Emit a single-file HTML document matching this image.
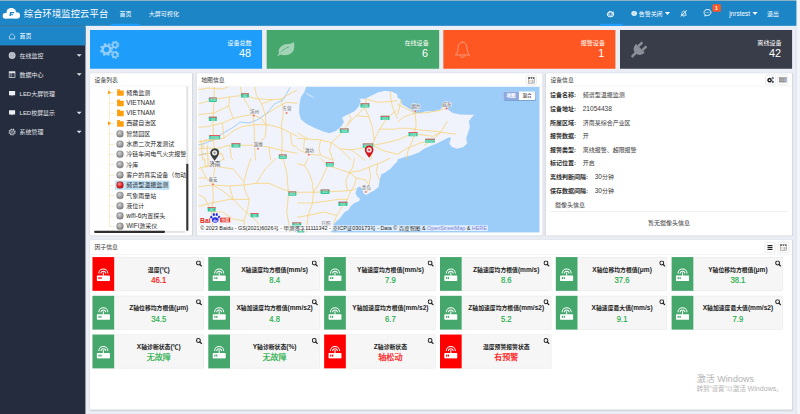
<!DOCTYPE html>
<html lang="zh-CN">
<head>
<meta charset="utf-8">
<title>综合环境监控云平台</title>
<style>
*{box-sizing:border-box;margin:0;padding:0}
html,body{width:800px;height:414px;overflow:hidden;background:#eceef5}
body{font-family:"Liberation Sans","Noto Sans CJK SC",sans-serif;font-size:14px;color:#333}
#app{position:absolute;left:0;top:0;width:1920px;height:994px;transform:scale(.4166667);transform-origin:0 0;background:#eceef5;overflow:hidden}
.abs{position:absolute}
/* header */
#topstrip{left:0;top:0;width:1912px;height:2px;background:#7fa9c0}
#hdr{left:0;top:2px;width:1912px;height:60px;background:#1b85c6;color:#fff}
#hdrline{left:0;top:61px;width:205px;height:3px;background:#15669a}
#rstrip{left:1912px;top:0;width:8px;height:994px;background:#f3f5fa}
#rline{left:1909px;top:62px;width:3px;height:932px;background:#dfe3ee}
#title{left:57px;top:16.500px;font-size:22.3px;letter-spacing:.25px;line-height:32px;white-space:nowrap;color:#fff}
.nav{top:3px;height:60px;line-height:60px;font-size:14.5px;color:#fff;white-space:nowrap}
#navbar{left:267px;top:57px;width:68px;height:5px;background:#1e9fff}
/* side */
#side{left:0;top:64px;width:205px;height:930px;background:#252c3e}
.mi{left:0;width:205px;height:45px;line-height:47px;color:#e4e6ea;font-size:14.3px;padding-left:47px;white-space:nowrap}
.mi.on{background:#1c86c8;color:#fff}
.mi svg{position:absolute;left:20px;top:13.500px;width:18px;height:18px}
.mi i{position:absolute;left:184px;top:20px;border:6px solid transparent;border-top-color:#dfe2e8;border-bottom-width:0}
/* stat cards */
.sc{top:72px;width:413px;height:93px;color:#fff}
.sc .l{position:absolute;right:25px;top:21px;font-size:14.6px;line-height:20px;white-space:nowrap}
.sc .n{position:absolute;right:26.500px;top:41px;font-size:26px;line-height:30px;white-space:nowrap}
.sc svg{position:absolute;left:24px;top:26px;width:48px;height:42px}
/* panels */
.pn{background:#fff;border-radius:2px;box-shadow:0 1px 4px rgba(0,0,20,.13)}
.ph{position:absolute;left:0;top:0;right:0;height:31px;border-bottom:1px solid #e6e8ee;line-height:31px;padding-left:11px;font-size:14px;color:#333;white-space:nowrap}
.hb{position:absolute;height:21px;border:1px solid #d9d9d9;background:#fcfcfc;border-radius:4px}
/* tree */
.tr{position:absolute;left:87px;height:24.7px;line-height:24.7px;font-size:14.400px;color:#2a2a2a;white-space:nowrap}
.ball{position:absolute;left:63px;width:18px;height:18px;margin-top:-1px;border-radius:50%;border:1px solid #666;background:radial-gradient(circle at 42% 35%,#d4d4d4 0,#a0a0a0 45%,#6a6a6a 100%)}
.ball.red{border-color:#8a1010;background:radial-gradient(circle at 42% 35%,#ff9a9a 0,#e52222 45%,#9a0d0d 100%)}
.fold{position:absolute;left:65px;width:16px;height:13px;background:#ff9f10;border-radius:1px}
.fold:before{content:"";position:absolute;left:0;top:-3px;width:7px;height:4px;background:#ff9f10;border-radius:1px 1px 0 0}
.stub{position:absolute;left:46px;width:13px;height:1px;background:#f7cf8e}
.arr{position:absolute;left:43px;border:5px solid transparent;border-left:8px solid #ff9f10;border-right-width:0}
/* info */
.ir{position:absolute;left:10px;height:20px;line-height:20px;font-size:14.400px;white-space:nowrap;color:#3a3a3a}
.ir .e{font-size:15.800px}
.ir b{font-weight:700;color:#303030;margin-right:16px;font-size:14.400px}
/* factor cards */
.fc{width:267px;height:81px;background:#f6f6f6;border:1px solid #e4e4e4}
.fc .ib{position:absolute;left:-1px;top:-1px;width:52px;height:81px;background:#45a76c}
.fc.r .ib{background:#ff0000}
.fc .ib svg{position:absolute;left:10px;top:24px;width:32px;height:34px}
.fc .t{position:absolute;left:51px;right:0;top:19px;text-align:center;font-size:14px;font-weight:700;line-height:20px;color:#222;white-space:nowrap}
.fc .v{position:absolute;left:51px;right:0;top:41px;text-align:center;font-size:21.500px;transform:scaleX(.86);line-height:26px;color:#1fae48;-webkit-text-stroke:.45px currentColor;white-space:nowrap}
.fc.r .v{color:#ff0a0a}
.fc .v.c{font-size:19.400px;transform:none}
.fc .t .e{font-size:15.800px}
.fc .s{position:absolute;left:247px;top:6.500px;width:15px;height:15px}
</style>
</head>
<body>
<div id="app">
<!--HEADER-->
<div id="hdr" class="abs"></div>
<div id="topstrip" class="abs"></div>
<div id="rstrip" class="abs"></div>
<div id="rline" class="abs"></div>
<svg class="abs" style="left:6px;top:19px;width:42px;height:26px" viewBox="0 0 42 26"><circle cx="7" cy="19" r="7" fill="#fff"/><circle cx="21" cy="11.500" r="11.500" fill="#fff"/><circle cx="34.200" cy="18.200" r="7.800" fill="#fff"/><rect x="7" y="14" width="27" height="12" fill="#fff"/><path d="M16.500 19.500 18.200 10h10.300l-.7 3h-6.500l-.4 2h5l-.5 2.500h-5l-.4 2z" fill="#1b85c6"/></svg>
<div id="title" class="abs">综合环境监控云平台</div>
<div class="abs nav" style="left:287px">首页</div>
<div class="abs nav" style="left:357px">大屏可视化</div>
<div id="navbar" class="abs"></div>
<div class="abs" style="left:1440px;top:57px;width:55px;height:5px;background:#1e9fff"></div>
<!--HEADER-RIGHT-->
<svg class="abs" style="left:1455px;top:23.500px;width:22px;height:18px" viewBox="0 0 22 18"><path d="M17.600 12.500A7.800 6.600 0 1 0 16 14.800" fill="#7db9e0" stroke="#fff" stroke-width="2.300" stroke-linecap="round"/><path d="M9.500 11 17.500 5" stroke="#fff" stroke-width="2.300" stroke-linecap="round"/><path d="M8 8h5.500l-3.800 4.200z" fill="#15609a"/><path d="M4.800 9a5 4.500 0 0 1 3.200-4" fill="none" stroke="#fff" stroke-width="1.500"/></svg>
<svg class="abs" style="left:1513.500px;top:25.500px;width:16px;height:13px" viewBox="0 0 16 14"><ellipse cx="8" cy="7" rx="7.300" ry="6.300" fill="#e3eff8"/><ellipse cx="8" cy="7" rx="3.500" ry="3" fill="#b4d5ec"/></svg>
<div class="abs nav" style="left:1533px;font-size:14.300px">告警关闭</div>
<i class="abs" style="left:1595.500px;top:29px;border:6.300px solid transparent;border-top:7px solid #fff;border-bottom-width:0"></i>
<svg class="abs" style="left:1630px;top:22px;width:22px;height:20px" viewBox="0 0 22 20"><path d="M5 14.500c1.600-1.500 1.500-3.500 1.800-5.500.4-2.600 2-4.300 4.200-4.300s3.800 1.700 4.200 4.300c.3 2 .2 4 1.800 5.500z" fill="none" stroke="#fff" stroke-width="1.800" stroke-linejoin="round"/><path d="M9.500 16.500a1.600 1.600 0 0 0 3 0" fill="none" stroke="#fff" stroke-width="1.600"/><path d="M4 17.500 18.500 2.500" stroke="#fff" stroke-width="2.100"/></svg>
<svg class="abs" style="left:1687px;top:19.500px;width:22px;height:22px" viewBox="0 0 20 20"><path d="M10 2.500c4.300 0 7.500 2.900 7.500 6.500s-3.200 6.500-7.500 6.500c-.8 0-1.600-.1-2.300-.3L4.200 17l.7-3C3.400 12.800 2.500 11 2.500 9c0-3.600 3.200-6.500 7.500-6.500z" fill="none" stroke="#fff" stroke-width="2.100" stroke-linejoin="round"/><circle cx="6.800" cy="9" r="1" fill="#fff"/><circle cx="10" cy="9" r="1" fill="#fff"/><circle cx="13.200" cy="9" r="1" fill="#fff"/></svg>
<div class="abs" style="left:1710px;top:10px;width:19.500px;height:17.500px;background:#ff5722;border-radius:2px;color:#fff;font-size:12.500px;font-weight:700;line-height:20px;text-align:center">1</div>
<div class="abs nav" style="left:1750px;font-size:15.600px">jnrstest</div>
<i class="abs" style="left:1805.500px;top:29px;border:6.300px solid transparent;border-top:7px solid #fff;border-bottom-width:0"></i>
<div class="abs nav" style="left:1841px;font-size:14px">退出</div>

<!--SIDE-->
<div id="side" class="abs"></div>
<div id="hdrline" class="abs"></div>
<!--MENU-->
<div class="abs mi on" style="top:64px"><svg viewBox="0 0 17 17"><path d="M2.5 8.2 8.5 2.2l6 6v6.3h-12z" fill="none" stroke="#fff" stroke-width="1.4" stroke-linejoin="round"/></svg>首页</div>
<div class="abs mi" style="top:110px"><svg viewBox="0 0 17 17"><circle cx="8.500" cy="8.500" r="7.300" fill="#c9cdd6"/><ellipse cx="8.500" cy="8.500" rx="3.300" ry="7.300" fill="none" stroke="#8e95a6" stroke-width="1"/><path d="M1.200 8.500h14.600M2.500 4.800h12M2.500 12.200h12" stroke="#8e95a6" stroke-width=".9"/><circle cx="8.500" cy="8.500" r="7.300" fill="none" stroke="#e3e6eb" stroke-width="1.200"/></svg>在线监控<i></i></div>
<div class="abs mi" style="top:156px"><svg viewBox="0 0 17 17"><rect x="1.800" y="2" width="13.400" height="13" fill="none" stroke="#e0e3e8" stroke-width="1.700"/><rect x="1.800" y="2" width="13.400" height="3.600" fill="#e0e3e8"/><path d="M6.500 5v10" stroke="#e0e3e8" stroke-width="1.300"/><path d="M2 10h13" stroke="#e0e3e8" stroke-width=".9" stroke-opacity=".6"/></svg>数据中心<i></i></div>
<div class="abs mi" style="top:202px"><svg viewBox="0 0 17 17"><path d="M1.500 2.500h14v9.500H10l-2.500 3v-3H1.500z" fill="#eceef2"/></svg>LED大屏管理</div>
<div class="abs mi" style="top:248px"><svg viewBox="0 0 17 17"><path d="M1.500 2.500h14v9.500H10l-2.500 3v-3H1.500z" fill="#eceef2"/></svg>LED校屏显示<i></i></div>
<div class="abs mi" style="top:294px"><svg viewBox="0 0 17 17"><g transform="rotate(10 8.500 8.500)"><circle cx="8.500" cy="8.500" r="6.89" fill="none" stroke="#d5d8de" stroke-width="2.62" stroke-dasharray="2.705 2.705"/></g><circle cx="8.500" cy="8.500" r="5.300" fill="none" stroke="#d5d8de" stroke-width="1.700"/><circle cx="8.500" cy="8.500" r="2.200" fill="none" stroke="#d5d8de" stroke-width="1.300"/></svg>系统管理<i></i></div>

<!--STATS-->
<div class="abs sc" style="left:216px;background:#1e9dfa"><svg viewBox="0 0 90 93" style="position:absolute;left:0;top:0;width:90px;height:93px"><g transform="rotate(11 39.6 47.0)"><circle cx="39.6" cy="47.0" r="9.30" fill="none" stroke="#90cdfb" stroke-width="6.20"/><circle cx="39.6" cy="47.0" r="13.33" fill="none" stroke="#90cdfb" stroke-width="4.65" stroke-dasharray="5.235 5.235"/></g><g transform="rotate(11 60.3 35.6)"><circle cx="60.3" cy="35.6" r="5.88" fill="none" stroke="#90cdfb" stroke-width="3.92"/><circle cx="60.3" cy="35.6" r="8.43" fill="none" stroke="#90cdfb" stroke-width="2.94" stroke-dasharray="3.782 3.782"/></g><g transform="rotate(11 60.3 59.4)"><circle cx="60.3" cy="59.4" r="5.88" fill="none" stroke="#90cdfb" stroke-width="3.92"/><circle cx="60.3" cy="59.4" r="8.43" fill="none" stroke="#90cdfb" stroke-width="2.94" stroke-dasharray="3.782 3.782"/></g></svg><div class="l">设备总数</div><div class="n">48</div></div>
<div class="abs sc" style="left:640px;width:414px;background:#45a76c"><svg viewBox="0 0 42 33" style="position:absolute;left:25px;top:29px;width:42px;height:33px"><path d="M0 32.500 5 27.500C1.500 21 5 12 14 7.500 22 3.500 33 6.500 39.500 0c3.500 6 3.500 17-3 24.500-7 8-20 8.500-28.500 5L2.500 33.800z" fill="#a3d3b6"/><path d="M10 23.500c4-5 9.500-9 17.500-11.500" fill="none" stroke="#45a76c" stroke-width="1.700" stroke-linecap="round"/></svg><div class="l">在线设备</div><div class="n">6</div></div>
<div class="abs sc" style="left:1064px;background:#ff5722"><svg viewBox="0 0 38 42" style="position:absolute;left:26.500px;top:26px;width:38px;height:42px"><path d="M19 0v4M1.500 34c4.500-3.500 6-8 6.500-14 .5-7 1-9.500 3-12.500C13 5 16 4 19 4s6 1 8 3.500c2 3 2.500 5.500 3 12.500.5 6 2 10.500 6.500 14z" fill="none" stroke="#ffab91" stroke-width="1.900" stroke-linejoin="round"/><path d="M14.500 35.500a4.500 4.500 0 0 0 9 0" fill="none" stroke="#ffab91" stroke-width="1.900"/></svg><div class="l">报警设备</div><div class="n">1</div></div>
<div class="abs sc" style="left:1488px;background:#393d49"><svg viewBox="0 0 46 46" style="position:absolute;left:23px;top:24px;width:46px;height:46px"><g transform="translate(26.200 19.600) rotate(45)" fill="#8b8e96"><path d="M-14.500 0h29v3a14.500 14.500 0 0 1-29 0z"/><rect x="-9.800" y="-13.500" width="6" height="14" rx="2"/><rect x="3.800" y="-13.500" width="6" height="14" rx="2"/><rect x="-3" y="14" width="6" height="16" rx="1.500"/></g></svg><div class="l">离线设备</div><div class="n">42</div></div>

<!--PANELS-->
<div class="abs pn" style="left:216px;top:176px;width:245px;height:389px"><div class="ph">设备列表</div>
<div class="abs" style="left:0;top:33px;width:231px;height:345px;overflow:hidden">
<div class="abs" style="left:46px;top:0;width:1px;height:334px;background:#f7cf8e"></div>
<div class="stub" style="top:13.0px"></div>
<i class="arr" style="top:8.0px"></i>
<div class="fold" style="top:8.0px"></div>
<div class="tr" style="top:0.7px">倾角监测</div>
<div class="stub" style="top:37.7px"></div>
<div class="fold" style="top:32.7px"></div>
<div class="tr" style="top:25.4px"><span style="font-size:15.500px">VIETNAM</span></div>
<div class="stub" style="top:62.4px"></div>
<div class="fold" style="top:57.4px"></div>
<div class="tr" style="top:50.0px"><span style="font-size:15.500px">VIETNAM</span></div>
<div class="stub" style="top:87.1px"></div>
<i class="arr" style="top:82.1px"></i>
<div class="fold" style="top:82.1px"></div>
<div class="tr" style="top:74.8px">西藏自治区</div>
<div class="stub" style="top:111.8px"></div>
<div class="ball" style="top:103.8px"></div>
<div class="tr" style="top:99.5px">智慧园区</div>
<div class="stub" style="top:136.5px"></div>
<div class="ball" style="top:128.5px"></div>
<div class="tr" style="top:124.2px">水质二次开发测试</div>
<div class="stub" style="top:161.2px"></div>
<div class="ball" style="top:153.2px"></div>
<div class="tr" style="top:148.8px">冷链车间电气火灾报警器</div>
<div class="stub" style="top:185.9px"></div>
<div class="ball" style="top:177.9px"></div>
<div class="tr" style="top:173.6px">冷库</div>
<div class="stub" style="top:210.6px"></div>
<div class="ball" style="top:202.6px"></div>
<div class="tr" style="top:198.2px">客户的真实设备（勿动）</div>
<div class="abs" style="left:61px;top:225.3px;width:129px;height:21px;background:#c6e5f9;border:1px solid #a3d3f1"></div>
<div class="stub" style="top:235.3px"></div>
<div class="ball red" style="top:227.3px"></div>
<div class="tr" style="top:222.9px">频谱型温振监测</div>
<div class="stub" style="top:260.0px"></div>
<div class="ball" style="top:252.0px"></div>
<div class="tr" style="top:247.7px">气象雨量站</div>
<div class="stub" style="top:284.7px"></div>
<div class="ball" style="top:276.7px"></div>
<div class="tr" style="top:272.3px">液位计</div>
<div class="stub" style="top:309.4px"></div>
<div class="ball" style="top:301.4px"></div>
<div class="tr" style="top:297.0px"><span style="font-size:15.500px">wifi-6</span>内置探头</div>
<div class="stub" style="top:334.1px"></div>
<div class="ball" style="top:326.1px"></div>
<div class="tr" style="top:321.7px"><span style="font-size:15.500px">WiFi</span>激采仪</div>
</div>
<div class="abs" style="left:231px;top:32px;width:5px;height:346px;background:#e3e3e3"></div>
<div class="abs" style="left:231px;top:217px;width:5px;height:161px;background:#333;border-radius:2px"></div>
<div class="abs" style="left:10px;top:378px;width:219px;height:5px;background:#e3e3e3"></div>
<div class="abs" style="left:10px;top:378px;width:170px;height:5px;background:#2e2e2e;border-radius:2px"></div>
</div>
<div class="abs pn" style="left:472px;top:176px;width:830px;height:389px"><div class="ph">地图信息</div>
<div class="hb" style="left:790px;top:4px;width:26px;height:25px;background:#fcfcfc;border-color:#d8d8d8;border-radius:5px"><svg viewBox="0 0 24 23" style="position:absolute;left:0;top:0;width:24px;height:23px"><rect x="5" y="5" width="14" height="13.500" fill="#fff" stroke="#777" stroke-width="1.300"/><path d="M5 6.500h4M11 6.500h3M16 6.500h3" stroke="#333" stroke-width="2.600"/><path d="M7 12h3.500M7 15h3.500" stroke="#c9a27a" stroke-width="1.500"/><path d="M12.500 10.500h5v7h-5z" fill="#bbb"/></svg></div>
<!--MAPS--><svg class="abs" style="left:4px;top:32px;width:819px;height:350px" viewBox="199 86.400 341.250 145.830" preserveAspectRatio="none">
<rect x="199" y="86" width="342" height="147" fill="#f0f3fb"/>
<path d="M306.9 86.0 305.2 91.4 301.6 96.7 300.1 103.9 299.8 112.8 301.6 119.1 306.9 123.6 315.9 128.0 324.8 131.6 330.2 132.9 336.5 130.7 341.8 126.3 344.5 121.8 342.7 117.3 348.1 114.6 355.2 111.0 359.7 105.7 361.5 100.3 359.7 98.5 366.0 98.5 371.3 95.8 378.5 92.3 385.7 90.5 392.8 91.4 398.0 94.1 398.0 97.1 401.6 99.4 402.5 103.9 406.9 106.6 411.4 109.3 415.9 112.8 421.3 112.8 426.6 111.0 433.8 111.0 440.9 109.3 443.6 106.6 446.3 106.6 449.9 110.2 453.5 112.8 460.6 114.3 469.6 114.6 474.9 114.6 472.2 117.3 469.6 120.9 470.5 127.1 468.7 132.5 466.9 137.9 467.8 143.2 464.2 146.8 457.9 148.6 452.6 146.8 449.9 143.2 451.7 137.9 449.9 137.0 444.5 139.7 437.4 143.2 430.2 145.9 424.8 148.6 419.5 152.2 412.3 154.9 405.2 156.7 398.0 159.3 398.0 161.6 395.5 163.4 391.0 168.7 385.7 172.3 382.1 174.1 380.3 179.5 379.4 186.6 374.9 190.2 369.6 192.9 366.9 194.7 364.2 192.9 363.3 189.3 360.6 186.3 357.9 187.5 356.1 192.9 357.9 196.5 360.6 198.3 359.7 200.9 355.2 202.7 351.7 205.4 349.0 209.9 345.4 211.7 342.7 215.2 340.0 218.8 336.5 221.5 333.8 225.1 332.0 229.6 331.6 232.4 540.4 232.4 540.4 86.2Z" fill="#9ccdf9"/>
<path d="M306.9 93.2 314.1 97.1" fill="none" stroke="#f0f3fb" stroke-width=".8"/>
<path d="M198.0 145.0 205.2 143.2 214.1 139.7 221.3 134.3 233.8 127.1 240.9 121.8 249.9 122.7 258.8 119.1 267.8 112.8 274.9 103.9 283.9 99.4 287.4 93.2 291.0 86.9M200.0 155.2 202.9 153.8 207.2 153.4" fill="none" stroke="#8cc2f8" stroke-width=".75"/>
<path d="M215.0 86.0 214.5 103.9 213.7 121.8 214.1 139.7 215.0 148.6M198.0 103.9 214.1 99.4 230.2 96.7 244.5 94.9 257.0 98.5 273.1 99.4 282.1 98.5 291.0 93.2 298.0 89.6M240.9 86.0 242.7 94.9 248.1 103.9 253.5 114.6 254.9 127.1 255.2 145.0 256.1 160.1M198.0 127.1 208.7 126.3 223.0 122.7 233.8 118.2 244.5 115.5 253.5 114.6 262.4 118.2 266.9 125.4 266.0 136.1 258.8 145.0M214.1 139.7 224.8 137.9 233.8 130.7 242.7 126.3 255.2 124.5 269.6 124.5 282.1 128.0 291.0 132.5 298.0 136.1M215.9 148.6 230.2 145.0 255.2 145.0 269.6 146.8 283.9 150.4 298.0 153.1M255.2 86.0 257.0 94.9 262.4 103.9 266.0 114.6 266.9 125.4M262.4 103.9 273.1 99.4M282.1 98.5 283.9 112.8 282.1 125.4 283.0 139.7 282.1 160.1M266.0 114.6 276.7 107.5 287.4 102.1 298.0 103.0M223.0 122.7 224.8 137.9M230.2 96.7 229.3 105.7 233.8 118.2M198.0 89.6 208.7 87.8 223.0 88.7 230.2 86.0M198.0 114.6 214.5 112.8 229.3 105.7M198.0 148.6 208.7 147.7 215.9 148.6 223.0 154.0 224.8 160.1M201.6 139.7 203.4 160.1M198.0 154.9 208.7 153.1 223.0 154.0M207.8 145.0 208.7 160.1M198.0 141.5 214.1 139.7M203.4 147.7 205.2 139.7 214.1 139.7M230.2 145.0 232.0 157.6 233.8 160.1M269.6 146.8 271.3 160.1M291.0 132.5 292.8 145.0 298.0 146.8M298.0 137.9 308.7 138.8 321.3 139.7 332.0 142.4 340.9 148.6 351.7 149.5 364.2 147.7 373.1 145.0 383.9 143.2 398.0 139.7M332.0 142.4 339.1 136.1 348.1 124.5 357.0 115.5 365.1 107.5 366.9 102.1 366.0 98.5M365.1 107.5 369.6 116.4 373.1 127.1 374.9 139.7 373.1 145.0 371.3 160.1M398.0 109.3 387.4 118.2 380.3 128.9 374.9 139.7M366.0 98.5 378.5 102.1 391.0 101.2 398.0 100.3M391.0 91.4 391.9 101.2 394.6 111.0 398.0 118.2M332.0 142.4 330.2 150.4 333.8 160.1M298.0 148.6 308.7 154.0 321.3 154.9 333.8 160.1M321.3 139.7 319.5 148.6 321.3 154.9M305.2 137.9 304.3 148.6 308.7 154.0M340.9 148.6 348.1 155.8 351.7 160.1M351.7 149.5 362.4 157.6 366.0 160.1M373.1 145.0 383.9 150.4 398.0 154.0M348.1 124.5 351.7 118.2 349.9 114.6M298.0 132.5 308.7 138.8M357.0 115.5 369.6 116.4M380.3 128.9 398.0 128.9M398.0 103.9 405.2 107.5 415.9 112.8 426.6 112.5 440.9 110.2 446.3 107.5M415.9 112.8 416.8 125.4 414.1 137.9 408.7 150.4 406.9 160.1M398.0 128.0 408.7 128.0 421.3 129.8 433.8 130.7 448.1 132.9 457.0 133.9M448.1 120.9 440.9 132.5 433.8 139.7 424.8 145.0M398.0 139.7 408.7 135.2 421.3 134.3 433.8 136.1 440.9 132.5M398.0 154.0 406.9 148.6 419.5 143.2 433.8 139.7M401.6 99.4 399.8 109.3 398.0 114.6M398.0 121.8 405.2 116.4 415.9 112.8M215.9 165.2 214.1 175.9 213.2 184.8 214.1 197.4 212.3 211.7 213.2 232.1M198.0 186.6 213.2 184.8 230.2 185.7 244.5 184.8 257.0 183.0 269.6 183.0 282.1 188.4 298.0 193.8M251.7 158.0 248.1 168.7 244.5 181.3 245.4 190.2 249.9 199.1 248.1 209.9 244.5 220.6 246.3 232.1M221.3 166.9 233.8 168.7 244.5 181.3M213.2 184.8 223.0 190.2 233.8 199.1 244.5 209.9 257.0 220.6 266.0 232.1M198.0 206.3 212.3 202.7 230.2 199.1 249.9 199.1M283.9 158.0 287.4 172.3 289.2 193.8 287.4 211.7 291.0 232.1M201.6 166.9 206.9 177.7 213.2 184.8M198.0 168.7 208.7 165.2 221.3 166.9M198.0 177.7 206.9 177.7M198.0 193.8 205.2 197.4 212.3 211.7M230.2 185.7 233.8 199.1M257.0 183.0 266.0 168.7 276.7 158.0M244.5 220.6 233.8 218.8 223.0 211.7 212.3 211.7M205.2 158.0 206.1 166.9 215.9 165.2 224.8 158.0M208.7 158.0 208.7 165.2M298.0 163.4 305.2 165.2 310.5 174.1 313.2 183.0 314.1 192.0 313.2 202.7 308.7 215.2 306.9 232.1M298.0 192.0 314.1 192.0 324.8 191.6 339.1 191.1 351.7 190.2 357.0 188.4M321.3 158.0 328.4 165.2 339.1 168.7 349.9 172.3 357.0 177.7 355.2 184.8 351.7 190.2 348.1 199.1 342.7 206.3 337.4 215.2 333.8 224.2M349.9 172.3 360.6 170.5 369.6 166.9 378.5 163.4 391.0 158.0M355.2 158.0 353.5 166.9 349.9 172.3 346.3 181.3 348.1 190.2M357.0 177.7 366.0 179.5 369.6 184.8 367.8 192.0M369.6 166.9 371.3 175.9 369.6 184.8M298.0 202.7 313.2 202.7 326.6 200.9 339.1 199.1 348.1 199.1M314.1 192.0 321.3 181.3 328.4 165.2M298.0 217.0 308.7 215.2 324.8 211.7 337.4 215.2M378.5 163.4 376.7 172.3 380.3 179.5M308.7 158.0 305.2 165.2" fill="none" stroke="#f9cf62" stroke-width=".68" stroke-linejoin="round"/>
<rect x="209.50" y="97.35" width="8.0" height="4.300" rx=".6" fill="#33c69b"/><rect x="209.50" y="97.35" width="8.0" height="1" fill="#ea5a5c"/><text x="213.50" y="101.20" font-size="2.900" fill="#e9fff6" text-anchor="middle">G18</text>
<rect x="241.60" y="93.05" width="8.0" height="4.300" rx=".6" fill="#33c69b"/><rect x="241.60" y="93.05" width="8.0" height="1" fill="#ea5a5c"/><text x="245.60" y="96.90" font-size="2.900" fill="#e9fff6" text-anchor="middle">G2</text>
<rect x="209.50" y="116.45" width="8.0" height="4.300" rx=".6" fill="#33c69b"/><rect x="209.50" y="116.45" width="8.0" height="1" fill="#ea5a5c"/><text x="213.50" y="120.30" font-size="2.900" fill="#e9fff6" text-anchor="middle">G3</text>
<rect x="209.80" y="134.75" width="11.0" height="4.300" rx=".6" fill="#33c69b"/><rect x="209.80" y="134.75" width="11.0" height="1" fill="#ea5a5c"/><text x="215.30" y="138.60" font-size="2.900" fill="#e9fff6" text-anchor="middle">G2001</text>
<rect x="232.10" y="142.95" width="9.0" height="4.300" rx=".6" fill="#33c69b"/><rect x="232.10" y="142.95" width="9.0" height="1" fill="#ea5a5c"/><text x="236.60" y="146.80" font-size="2.900" fill="#e9fff6" text-anchor="middle">G20</text>
<rect x="279.40" y="154.25" width="8.0" height="4.300" rx=".6" fill="#33c69b"/><rect x="279.40" y="154.25" width="8.0" height="1" fill="#ea5a5c"/><text x="283.40" y="158.10" font-size="2.900" fill="#e9fff6" text-anchor="middle">G25</text>
<rect x="340.40" y="128.25" width="9.0" height="4.300" rx=".6" fill="#33c69b"/><rect x="340.40" y="128.25" width="9.0" height="1" fill="#ea5a5c"/><text x="344.90" y="132.10" font-size="2.900" fill="#e9fff6" text-anchor="middle">G18</text>
<rect x="361.10" y="103.05" width="9.0" height="4.300" rx=".6" fill="#33c69b"/><rect x="361.10" y="103.05" width="9.0" height="1" fill="#ea5a5c"/><text x="365.60" y="106.90" font-size="2.900" fill="#e9fff6" text-anchor="middle">G18</text>
<rect x="326.50" y="161.85" width="8.0" height="4.300" rx=".6" fill="#33c69b"/><rect x="326.50" y="161.85" width="8.0" height="1" fill="#ea5a5c"/><text x="330.50" y="165.70" font-size="2.900" fill="#e9fff6" text-anchor="middle">G20</text>
<rect x="381.20" y="115.55" width="9.0" height="4.300" rx=".6" fill="#33c69b"/><rect x="381.20" y="115.55" width="9.0" height="1" fill="#ea5a5c"/><text x="385.70" y="119.40" font-size="2.900" fill="#e9fff6" text-anchor="middle">G15</text>
<rect x="409.20" y="131.75" width="9.0" height="4.300" rx=".6" fill="#33c69b"/><rect x="409.20" y="131.75" width="9.0" height="1" fill="#ea5a5c"/><text x="413.70" y="135.60" font-size="2.900" fill="#e9fff6" text-anchor="middle">G18</text>
<rect x="425.95" y="138.45" width="9.5" height="4.300" rx=".6" fill="#33c69b"/><rect x="425.95" y="138.45" width="9.5" height="1" fill="#ea5a5c"/><text x="430.70" y="142.30" font-size="2.900" fill="#e9fff6" text-anchor="middle">G2011</text>
<rect x="363.40" y="143.25" width="10.5" height="4.300" rx=".6" fill="#33c69b"/><rect x="363.40" y="143.25" width="10.5" height="1" fill="#ea5a5c"/><text x="368.65" y="147.10" font-size="2.900" fill="#e9fff6" text-anchor="middle">G1511</text>
<rect x="289.00" y="191.25" width="8.0" height="4.300" rx=".6" fill="#33c69b"/><rect x="289.00" y="191.25" width="8.0" height="1" fill="#ea5a5c"/><text x="293.00" y="195.10" font-size="2.900" fill="#e9fff6" text-anchor="middle">G22</text>
<rect x="321.20" y="189.35" width="9.0" height="4.300" rx=".6" fill="#33c69b"/><rect x="321.20" y="189.35" width="9.0" height="1" fill="#ea5a5c"/><text x="325.70" y="193.20" font-size="2.900" fill="#e9fff6" text-anchor="middle">G22</text>
<rect x="339.10" y="201.45" width="9.0" height="4.300" rx=".6" fill="#33c69b"/><rect x="339.10" y="201.45" width="9.0" height="1" fill="#ea5a5c"/><text x="343.60" y="205.30" font-size="2.900" fill="#e9fff6" text-anchor="middle">G15</text>
<rect x="208.30" y="206.85" width="8.0" height="4.300" rx=".6" fill="#33c69b"/><rect x="208.30" y="206.85" width="8.0" height="1" fill="#ea5a5c"/><text x="212.30" y="210.70" font-size="2.900" fill="#e9fff6" text-anchor="middle">G2</text>
<rect x="251.20" y="212.75" width="8.0" height="4.300" rx=".6" fill="#33c69b"/><rect x="251.20" y="212.75" width="8.0" height="1" fill="#ea5a5c"/><text x="255.20" y="216.60" font-size="2.900" fill="#e9fff6" text-anchor="middle">G3</text>
<rect x="292.90" y="222.15" width="9.0" height="4.300" rx=".6" fill="#33c69b"/><rect x="292.90" y="222.15" width="9.0" height="1" fill="#ea5a5c"/><text x="297.40" y="226.00" font-size="2.900" fill="#e9fff6" text-anchor="middle">G25</text>
<rect x="298.00" y="228.85" width="7.0" height="4.300" rx=".6" fill="#33c69b"/><rect x="298.00" y="228.85" width="7.0" height="1" fill="#ea5a5c"/><text x="301.50" y="232.70" font-size="2.900" fill="#e9fff6" text-anchor="middle">G2</text>
<text x="255.3" y="112.4" font-size="4.600" fill="#666" text-anchor="middle" stroke="#f6f6fb" stroke-width=".8" paint-order="stroke">滨州</text>
<circle cx="254.6" cy="115.4" r="1.050" fill="#e8504f" stroke="#fff" stroke-width=".35"/>
<text x="287.7" y="109.4" font-size="4.600" fill="#666" text-anchor="middle" stroke="#f6f6fb" stroke-width=".8" paint-order="stroke">东营</text>
<circle cx="287.3" cy="112.7" r="1.050" fill="#e8504f" stroke="#fff" stroke-width=".35"/>
<text x="258.7" y="146.0" font-size="4.600" fill="#666" text-anchor="middle" stroke="#f6f6fb" stroke-width=".8" paint-order="stroke">淄博</text>
<circle cx="258.7" cy="148.6" r="1.050" fill="#e8504f" stroke="#fff" stroke-width=".35"/>
<text x="310.2" y="151.8" font-size="4.600" fill="#666" text-anchor="middle" stroke="#f6f6fb" stroke-width=".8" paint-order="stroke">潍坊</text>
<circle cx="309.6" cy="154.6" r="1.050" fill="#e8504f" stroke="#fff" stroke-width=".35"/>
<text x="416.4" y="108.2" font-size="4.600" fill="#666" text-anchor="middle" stroke="#f6f6fb" stroke-width=".8" paint-order="stroke">烟台</text>
<circle cx="415.9" cy="111.0" r="1.050" fill="#e8504f" stroke="#fff" stroke-width=".35"/>
<text x="447.2" y="105.5" font-size="4.600" fill="#666" text-anchor="middle" stroke="#f6f6fb" stroke-width=".8" paint-order="stroke">威海</text>
<circle cx="447.2" cy="108.4" r="1.050" fill="#e8504f" stroke="#fff" stroke-width=".35"/>
<text x="213.7" y="181.0" font-size="4.600" fill="#666" text-anchor="middle" stroke="#f6f6fb" stroke-width=".8" paint-order="stroke">泰安</text>
<circle cx="213.7" cy="184.3" r="1.050" fill="#e8504f" stroke="#fff" stroke-width=".35"/>
<text x="367.0" y="188.4" font-size="4.600" fill="#666" text-anchor="middle" stroke="#f6f6fb" stroke-width=".8" paint-order="stroke">青岛</text>
<circle cx="366.5" cy="191.7" r="1.050" fill="#e8504f" stroke="#fff" stroke-width=".35"/>
<text x="326.6" y="224.4" font-size="4.600" fill="#666" text-anchor="middle" stroke="#f6f6fb" stroke-width=".8" paint-order="stroke">日照</text>
<text x="215.500" y="165.300" font-size="5.600" fill="#444" text-anchor="middle" stroke="#f6f6fb" stroke-width=".9" paint-order="stroke">济南</text>
<path d="M212.500 150.500a4 4 0 0 1 7.500 1z" fill="#13907f"/>
<path d="M215.3 160.5c-2.800-3.500-4.350-5.600-4.350-8a4.350 4.350 0 0 1 8.700 0c0 2.400-1.550 4.500-4.350 8z" fill="#3d3d3d"/><circle cx="215.3" cy="152.6" r="2.600" fill="#e6e6e6"/><circle cx="215.3" cy="152.6" r="1.100" fill="#8c8c8c"/>
<path d="M369.8 157.6c-2.800-3.500-4.350-5.600-4.350-8a4.350 4.350 0 0 1 8.700 0c0 2.400-1.550 4.500-4.350 8z" fill="#d3141c"/><circle cx="369.8" cy="149.7" r="2.600" fill="#fbe3e4"/><circle cx="369.8" cy="149.7" r="1.100" fill="#d9454b"/>
<rect x="504.600" y="91.900" width="32" height="8.600" rx="1.200" fill="#4a6a9a" fill-opacity=".55"/><rect x="504" y="91.200" width="32" height="8.600" rx="1.200" fill="#fff"/><path d="M505.200 91.200h14.400v8.600h-14.400a1.200 1.200 0 0 1-1.200-1.200v-6.200a1.200 1.200 0 0 1 1.200-1.200z" fill="#8ea8e0"/>
<text x="511.800" y="97.200" font-size="4.600" fill="#fff" text-anchor="middle" font-weight="700">地图</text><text x="527.800" y="97.200" font-size="4.600" fill="#111" text-anchor="middle">混合</text>
<text x="200.700" y="222.300" font-size="7.400" font-weight="700" fill="#e1251b" stroke="#fff" stroke-width=".8" paint-order="stroke" font-family="Liberation Sans,sans-serif" textLength="10.600" lengthAdjust="spacingAndGlyphs">Bai</text>
<g fill="#2932e1" stroke="#fff" stroke-width=".5" paint-order="stroke"><ellipse cx="215.900" cy="219.800" rx="3.300" ry="2.700"/><ellipse cx="212" cy="216.900" rx="1.100" ry="1.400"/><ellipse cx="214.500" cy="214.300" rx="1.150" ry="1.500"/><ellipse cx="217.400" cy="214.300" rx="1.150" ry="1.500"/><ellipse cx="219.800" cy="216.900" rx="1.100" ry="1.400"/></g>
<text x="215.900" y="221.300" font-size="3.400" fill="#fff" text-anchor="middle" font-weight="700">du</text>
<rect x="220.600" y="217" width="10.500" height="5.400" fill="#e1251b" stroke="#fff" stroke-width=".5"/><text x="225.850" y="221.400" font-size="4" fill="#fff" text-anchor="middle">地图</text>
<rect x="199" y="225" width="289.500" height="5.800" fill="#fff" fill-opacity=".7"/>
<text x="201" y="229.700" font-size="4.750" fill="#222" textLength="286.500" lengthAdjust="spacingAndGlyphs">© 2023 Baidu - GS(2021)6026号 - 甲测资字11111342 - 京ICP证030173号 - Data © 百度智图 &amp; <tspan fill="#7b7bd8">OpenStreetMap</tspan> &amp; <tspan fill="#7b7bd8">HERE</tspan></text>
</svg><!--MAPE-->
</div>
<div class="abs pn" style="left:1310px;top:176px;width:591px;height:389px"><div class="ph">设备信息</div>
<div class="hb" style="left:527px;top:2.500px;width:25px;height:25.500px"><svg viewBox="0 0 23 23" style="position:absolute;left:0;top:0;width:23px;height:23px"><circle cx="9" cy="12.500" r="3.600" fill="none" stroke="#111" stroke-width="3"/><circle cx="9" cy="12.500" r="5" fill="none" stroke="#111" stroke-width="1.800" stroke-dasharray="1.900 2"/><circle cx="16.500" cy="7.500" r="2" fill="none" stroke="#2b3f66" stroke-width="1.900"/><circle cx="16.500" cy="16.500" r="2" fill="#2b5fa8" stroke="#223" stroke-width="1.200"/></svg></div>
<div class="hb" style="left:556px;top:2.500px;width:25px;height:25.500px"><svg viewBox="0 0 23 23" style="position:absolute;left:0;top:0;width:23px;height:23px"><rect x="3.500" y="6.500" width="16.500" height="10.500" fill="#8c8c8c" stroke="#6a6a6a" stroke-width="1"/><path d="M7.500 6.500v10.500M12 6.500v10.500M16 6.500v10.500M3.500 10h16.500M3.500 13.500h16.500" stroke="#c9c9c9" stroke-width=".9"/><rect x="17.500" y="8" width="3" height="8" fill="#9cc3ee"/></svg></div>
<div class="ir" style="top:42.0px"><b>设备名称:</b>频谱型温振监测</div>
<div class="ir" style="top:74.8px"><b>设备地址:</b><span class="e">21054438</span></div>
<div class="ir" style="top:107.6px"><b>所属区域:</b>济南某综合产业区</div>
<div class="ir" style="top:140.4px"><b>报警数据:</b>开</div>
<div class="ir" style="top:173.2px"><b>报警类型:</b>离线报警、超限报警</div>
<div class="ir" style="top:206.0px"><b>标记位置:</b>开启</div>
<div class="ir" style="top:238.8px"><b>离线判断间隔:</b><span class="e">30</span>分钟</div>
<div class="ir" style="top:271.6px"><b>保存数据间隔:</b><span class="e">30</span>分钟</div>
<div class="ir" style="left:22px;top:305px">摄像头信息</div>
<div class="abs" style="left:10px;top:331px;width:570px;height:1px;background:#d9d9d9"></div>
<div class="ir" style="left:0;width:591px;text-align:center;top:348px">暂无摄像头信息</div>
</div>
<!--FACTORS-->
<div class="abs pn" style="left:216px;top:576px;width:1685px;height:407px"><div class="ph" style="height:36px;line-height:35px">因子信息</div>
<div class="hb" style="left:1619px;top:5px;width:26px;height:26px"><svg viewBox="0 0 24 24" style="position:absolute;left:0;top:0;width:24px;height:24px"><path d="M6 7.500h12M6 12h12M6 16.500h12" stroke="#222" stroke-width="2.600"/></svg></div>
<div class="hb" style="left:1650px;top:5px;width:28px;height:26px"><svg viewBox="0 0 26 24" style="position:absolute;left:0;top:0;width:26px;height:24px"><rect x="6" y="5" width="14" height="13.500" fill="#fff" stroke="#777" stroke-width="1.300"/><path d="M6 6.500h4M12 6.500h3M17 6.500h3" stroke="#333" stroke-width="2.600"/><path d="M8 12h3.500M8 15h3.500" stroke="#c9a27a" stroke-width="1.500"/><path d="M13.500 10.500h5v7h-5z" fill="#bbb"/></svg></div>
<div class="abs fc r" style="left:6px;top:41px"><div class="ib"><svg viewBox="0 0 32 34"><path d="M5 15.500a11 11 0 0 1 22 0" fill="none" stroke="#fff" stroke-width="2.500"/><path d="M10.200 15.500a5.800 5.800 0 0 1 11.600 0" fill="none" stroke="#fff" stroke-width="2.400"/><path d="M16 13v8" stroke="#fff" stroke-width="2.400"/><rect x="0" y="20" width="32" height="13.500" rx="1.800" fill="#fff"/><rect x="4.300" y="24" width="3" height="4.800" fill="#ff0000"/><rect x="8.800" y="24" width="3" height="4.800" fill="#ff0000"/></svg></div><div class="t">温度<span class="e">(</span>℃<span class="e">)</span></div><div class="v">46.1</div><svg class="s" viewBox="0 0 14 14"><circle cx="5.800" cy="5.800" r="4.300" fill="none" stroke="#222" stroke-width="2.300"/><path d="M9 9 12.800 12.800" stroke="#222" stroke-width="2.800" stroke-linecap="round"/></svg></div>
<div class="abs fc" style="left:284px;top:41px"><div class="ib"><svg viewBox="0 0 32 34"><path d="M5 15.500a11 11 0 0 1 22 0" fill="none" stroke="#fff" stroke-width="2.500"/><path d="M10.200 15.500a5.800 5.800 0 0 1 11.600 0" fill="none" stroke="#fff" stroke-width="2.400"/><path d="M16 13v8" stroke="#fff" stroke-width="2.400"/><rect x="0" y="20" width="32" height="13.500" rx="1.800" fill="#fff"/><rect x="4.300" y="24" width="3" height="4.800" fill="#45a76c"/><rect x="8.800" y="24" width="3" height="4.800" fill="#45a76c"/></svg></div><div class="t"><span class="e">X</span>轴速度均方根值<span class="e">(mm/s)</span></div><div class="v">8.4</div><svg class="s" viewBox="0 0 14 14"><circle cx="5.800" cy="5.800" r="4.300" fill="none" stroke="#222" stroke-width="2.300"/><path d="M9 9 12.800 12.800" stroke="#222" stroke-width="2.800" stroke-linecap="round"/></svg></div>
<div class="abs fc" style="left:562px;top:41px"><div class="ib"><svg viewBox="0 0 32 34"><path d="M5 15.500a11 11 0 0 1 22 0" fill="none" stroke="#fff" stroke-width="2.500"/><path d="M10.200 15.500a5.800 5.800 0 0 1 11.600 0" fill="none" stroke="#fff" stroke-width="2.400"/><path d="M16 13v8" stroke="#fff" stroke-width="2.400"/><rect x="0" y="20" width="32" height="13.500" rx="1.800" fill="#fff"/><rect x="4.300" y="24" width="3" height="4.800" fill="#45a76c"/><rect x="8.800" y="24" width="3" height="4.800" fill="#45a76c"/></svg></div><div class="t"><span class="e">Y</span>轴速度均方根值<span class="e">(mm/s)</span></div><div class="v">7.9</div><svg class="s" viewBox="0 0 14 14"><circle cx="5.800" cy="5.800" r="4.300" fill="none" stroke="#222" stroke-width="2.300"/><path d="M9 9 12.800 12.800" stroke="#222" stroke-width="2.800" stroke-linecap="round"/></svg></div>
<div class="abs fc" style="left:840px;top:41px"><div class="ib"><svg viewBox="0 0 32 34"><path d="M5 15.500a11 11 0 0 1 22 0" fill="none" stroke="#fff" stroke-width="2.500"/><path d="M10.200 15.500a5.800 5.800 0 0 1 11.600 0" fill="none" stroke="#fff" stroke-width="2.400"/><path d="M16 13v8" stroke="#fff" stroke-width="2.400"/><rect x="0" y="20" width="32" height="13.500" rx="1.800" fill="#fff"/><rect x="4.300" y="24" width="3" height="4.800" fill="#45a76c"/><rect x="8.800" y="24" width="3" height="4.800" fill="#45a76c"/></svg></div><div class="t"><span class="e">Z</span>轴速度均方根值<span class="e">(mm/s)</span></div><div class="v">8.6</div><svg class="s" viewBox="0 0 14 14"><circle cx="5.800" cy="5.800" r="4.300" fill="none" stroke="#222" stroke-width="2.300"/><path d="M9 9 12.800 12.800" stroke="#222" stroke-width="2.800" stroke-linecap="round"/></svg></div>
<div class="abs fc" style="left:1118px;top:41px"><div class="ib"><svg viewBox="0 0 32 34"><path d="M5 15.500a11 11 0 0 1 22 0" fill="none" stroke="#fff" stroke-width="2.500"/><path d="M10.200 15.500a5.800 5.800 0 0 1 11.600 0" fill="none" stroke="#fff" stroke-width="2.400"/><path d="M16 13v8" stroke="#fff" stroke-width="2.400"/><rect x="0" y="20" width="32" height="13.500" rx="1.800" fill="#fff"/><rect x="4.300" y="24" width="3" height="4.800" fill="#45a76c"/><rect x="8.800" y="24" width="3" height="4.800" fill="#45a76c"/></svg></div><div class="t"><span class="e">X</span>轴位移均方根值<span class="e">(μm)</span></div><div class="v">37.6</div><svg class="s" viewBox="0 0 14 14"><circle cx="5.800" cy="5.800" r="4.300" fill="none" stroke="#222" stroke-width="2.300"/><path d="M9 9 12.800 12.800" stroke="#222" stroke-width="2.800" stroke-linecap="round"/></svg></div>
<div class="abs fc" style="left:1396px;top:41px"><div class="ib"><svg viewBox="0 0 32 34"><path d="M5 15.500a11 11 0 0 1 22 0" fill="none" stroke="#fff" stroke-width="2.500"/><path d="M10.200 15.500a5.800 5.800 0 0 1 11.600 0" fill="none" stroke="#fff" stroke-width="2.400"/><path d="M16 13v8" stroke="#fff" stroke-width="2.400"/><rect x="0" y="20" width="32" height="13.500" rx="1.800" fill="#fff"/><rect x="4.300" y="24" width="3" height="4.800" fill="#45a76c"/><rect x="8.800" y="24" width="3" height="4.800" fill="#45a76c"/></svg></div><div class="t"><span class="e">Y</span>轴位移均方根值<span class="e">(μm)</span></div><div class="v">38.1</div><svg class="s" viewBox="0 0 14 14"><circle cx="5.800" cy="5.800" r="4.300" fill="none" stroke="#222" stroke-width="2.300"/><path d="M9 9 12.800 12.800" stroke="#222" stroke-width="2.800" stroke-linecap="round"/></svg></div>
<div class="abs fc" style="left:6px;top:134px"><div class="ib"><svg viewBox="0 0 32 34"><path d="M5 15.500a11 11 0 0 1 22 0" fill="none" stroke="#fff" stroke-width="2.500"/><path d="M10.200 15.500a5.800 5.800 0 0 1 11.600 0" fill="none" stroke="#fff" stroke-width="2.400"/><path d="M16 13v8" stroke="#fff" stroke-width="2.400"/><rect x="0" y="20" width="32" height="13.500" rx="1.800" fill="#fff"/><rect x="4.300" y="24" width="3" height="4.800" fill="#45a76c"/><rect x="8.800" y="24" width="3" height="4.800" fill="#45a76c"/></svg></div><div class="t"><span class="e">Z</span>轴位移均方根值<span class="e">(μm)</span></div><div class="v">34.5</div><svg class="s" viewBox="0 0 14 14"><circle cx="5.800" cy="5.800" r="4.300" fill="none" stroke="#222" stroke-width="2.300"/><path d="M9 9 12.800 12.800" stroke="#222" stroke-width="2.800" stroke-linecap="round"/></svg></div>
<div class="abs fc" style="left:284px;top:134px"><div class="ib"><svg viewBox="0 0 32 34"><path d="M5 15.500a11 11 0 0 1 22 0" fill="none" stroke="#fff" stroke-width="2.500"/><path d="M10.200 15.500a5.800 5.800 0 0 1 11.600 0" fill="none" stroke="#fff" stroke-width="2.400"/><path d="M16 13v8" stroke="#fff" stroke-width="2.400"/><rect x="0" y="20" width="32" height="13.500" rx="1.800" fill="#fff"/><rect x="4.300" y="24" width="3" height="4.800" fill="#45a76c"/><rect x="8.800" y="24" width="3" height="4.800" fill="#45a76c"/></svg></div><div class="t"><span class="e">X</span>轴加速度均方根值<span class="e">(mm/s2)</span></div><div class="v">4.8</div><svg class="s" viewBox="0 0 14 14"><circle cx="5.800" cy="5.800" r="4.300" fill="none" stroke="#222" stroke-width="2.300"/><path d="M9 9 12.800 12.800" stroke="#222" stroke-width="2.800" stroke-linecap="round"/></svg></div>
<div class="abs fc" style="left:562px;top:134px"><div class="ib"><svg viewBox="0 0 32 34"><path d="M5 15.500a11 11 0 0 1 22 0" fill="none" stroke="#fff" stroke-width="2.500"/><path d="M10.200 15.500a5.800 5.800 0 0 1 11.600 0" fill="none" stroke="#fff" stroke-width="2.400"/><path d="M16 13v8" stroke="#fff" stroke-width="2.400"/><rect x="0" y="20" width="32" height="13.500" rx="1.800" fill="#fff"/><rect x="4.300" y="24" width="3" height="4.800" fill="#45a76c"/><rect x="8.800" y="24" width="3" height="4.800" fill="#45a76c"/></svg></div><div class="t"><span class="e">Y</span>轴加速度均方根值<span class="e">(mm/s2)</span></div><div class="v">6.7</div><svg class="s" viewBox="0 0 14 14"><circle cx="5.800" cy="5.800" r="4.300" fill="none" stroke="#222" stroke-width="2.300"/><path d="M9 9 12.800 12.800" stroke="#222" stroke-width="2.800" stroke-linecap="round"/></svg></div>
<div class="abs fc" style="left:840px;top:134px"><div class="ib"><svg viewBox="0 0 32 34"><path d="M5 15.500a11 11 0 0 1 22 0" fill="none" stroke="#fff" stroke-width="2.500"/><path d="M10.200 15.500a5.800 5.800 0 0 1 11.600 0" fill="none" stroke="#fff" stroke-width="2.400"/><path d="M16 13v8" stroke="#fff" stroke-width="2.400"/><rect x="0" y="20" width="32" height="13.500" rx="1.800" fill="#fff"/><rect x="4.300" y="24" width="3" height="4.800" fill="#45a76c"/><rect x="8.800" y="24" width="3" height="4.800" fill="#45a76c"/></svg></div><div class="t"><span class="e">Z</span>轴加速度均方根值<span class="e">(mm/s2)</span></div><div class="v">5.2</div><svg class="s" viewBox="0 0 14 14"><circle cx="5.800" cy="5.800" r="4.300" fill="none" stroke="#222" stroke-width="2.300"/><path d="M9 9 12.800 12.800" stroke="#222" stroke-width="2.800" stroke-linecap="round"/></svg></div>
<div class="abs fc" style="left:1118px;top:134px"><div class="ib"><svg viewBox="0 0 32 34"><path d="M5 15.500a11 11 0 0 1 22 0" fill="none" stroke="#fff" stroke-width="2.500"/><path d="M10.200 15.500a5.800 5.800 0 0 1 11.600 0" fill="none" stroke="#fff" stroke-width="2.400"/><path d="M16 13v8" stroke="#fff" stroke-width="2.400"/><rect x="0" y="20" width="32" height="13.500" rx="1.800" fill="#fff"/><rect x="4.300" y="24" width="3" height="4.800" fill="#45a76c"/><rect x="8.800" y="24" width="3" height="4.800" fill="#45a76c"/></svg></div><div class="t"><span class="e">X</span>轴速度最大值<span class="e">(mm/s)</span></div><div class="v">9.1</div><svg class="s" viewBox="0 0 14 14"><circle cx="5.800" cy="5.800" r="4.300" fill="none" stroke="#222" stroke-width="2.300"/><path d="M9 9 12.800 12.800" stroke="#222" stroke-width="2.800" stroke-linecap="round"/></svg></div>
<div class="abs fc" style="left:1396px;top:134px"><div class="ib"><svg viewBox="0 0 32 34"><path d="M5 15.500a11 11 0 0 1 22 0" fill="none" stroke="#fff" stroke-width="2.500"/><path d="M10.200 15.500a5.800 5.800 0 0 1 11.600 0" fill="none" stroke="#fff" stroke-width="2.400"/><path d="M16 13v8" stroke="#fff" stroke-width="2.400"/><rect x="0" y="20" width="32" height="13.500" rx="1.800" fill="#fff"/><rect x="4.300" y="24" width="3" height="4.800" fill="#45a76c"/><rect x="8.800" y="24" width="3" height="4.800" fill="#45a76c"/></svg></div><div class="t"><span class="e">X</span>轴加速度最大值<span class="e">(mm/s2)</span></div><div class="v">7.9</div><svg class="s" viewBox="0 0 14 14"><circle cx="5.800" cy="5.800" r="4.300" fill="none" stroke="#222" stroke-width="2.300"/><path d="M9 9 12.800 12.800" stroke="#222" stroke-width="2.800" stroke-linecap="round"/></svg></div>
<div class="abs fc" style="left:6px;top:227px"><div class="ib"><svg viewBox="0 0 32 34"><path d="M5 15.500a11 11 0 0 1 22 0" fill="none" stroke="#fff" stroke-width="2.500"/><path d="M10.200 15.500a5.800 5.800 0 0 1 11.600 0" fill="none" stroke="#fff" stroke-width="2.400"/><path d="M16 13v8" stroke="#fff" stroke-width="2.400"/><rect x="0" y="20" width="32" height="13.500" rx="1.800" fill="#fff"/><rect x="4.300" y="24" width="3" height="4.800" fill="#45a76c"/><rect x="8.800" y="24" width="3" height="4.800" fill="#45a76c"/></svg></div><div class="t"><span class="e">X</span>轴诊断状态<span class="e">(</span>℃<span class="e">)</span></div><div class="v c">无故障</div><svg class="s" viewBox="0 0 14 14"><circle cx="5.800" cy="5.800" r="4.300" fill="none" stroke="#222" stroke-width="2.300"/><path d="M9 9 12.800 12.800" stroke="#222" stroke-width="2.800" stroke-linecap="round"/></svg></div>
<div class="abs fc" style="left:284px;top:227px"><div class="ib"><svg viewBox="0 0 32 34"><path d="M5 15.500a11 11 0 0 1 22 0" fill="none" stroke="#fff" stroke-width="2.500"/><path d="M10.200 15.500a5.800 5.800 0 0 1 11.600 0" fill="none" stroke="#fff" stroke-width="2.400"/><path d="M16 13v8" stroke="#fff" stroke-width="2.400"/><rect x="0" y="20" width="32" height="13.500" rx="1.800" fill="#fff"/><rect x="4.300" y="24" width="3" height="4.800" fill="#45a76c"/><rect x="8.800" y="24" width="3" height="4.800" fill="#45a76c"/></svg></div><div class="t"><span class="e">Y</span>轴诊断状态<span class="e">(%)</span></div><div class="v c">无故障</div><svg class="s" viewBox="0 0 14 14"><circle cx="5.800" cy="5.800" r="4.300" fill="none" stroke="#222" stroke-width="2.300"/><path d="M9 9 12.800 12.800" stroke="#222" stroke-width="2.800" stroke-linecap="round"/></svg></div>
<div class="abs fc r" style="left:562px;top:227px"><div class="ib"><svg viewBox="0 0 32 34"><path d="M5 15.500a11 11 0 0 1 22 0" fill="none" stroke="#fff" stroke-width="2.500"/><path d="M10.200 15.500a5.800 5.800 0 0 1 11.600 0" fill="none" stroke="#fff" stroke-width="2.400"/><path d="M16 13v8" stroke="#fff" stroke-width="2.400"/><rect x="0" y="20" width="32" height="13.500" rx="1.800" fill="#fff"/><rect x="4.300" y="24" width="3" height="4.800" fill="#ff0000"/><rect x="8.800" y="24" width="3" height="4.800" fill="#ff0000"/></svg></div><div class="t"><span class="e">Z</span>轴诊断状态</div><div class="v c">轴松动</div><svg class="s" viewBox="0 0 14 14"><circle cx="5.800" cy="5.800" r="4.300" fill="none" stroke="#222" stroke-width="2.300"/><path d="M9 9 12.800 12.800" stroke="#222" stroke-width="2.800" stroke-linecap="round"/></svg></div>
<div class="abs fc r" style="left:840px;top:227px"><div class="ib"><svg viewBox="0 0 32 34"><path d="M5 15.500a11 11 0 0 1 22 0" fill="none" stroke="#fff" stroke-width="2.500"/><path d="M10.200 15.500a5.800 5.800 0 0 1 11.600 0" fill="none" stroke="#fff" stroke-width="2.400"/><path d="M16 13v8" stroke="#fff" stroke-width="2.400"/><rect x="0" y="20" width="32" height="13.500" rx="1.800" fill="#fff"/><rect x="4.300" y="24" width="3" height="4.800" fill="#ff0000"/><rect x="8.800" y="24" width="3" height="4.800" fill="#ff0000"/></svg></div><div class="t">温度预警报警状态</div><div class="v c">有预警</div><svg class="s" viewBox="0 0 14 14"><circle cx="5.800" cy="5.800" r="4.300" fill="none" stroke="#222" stroke-width="2.300"/><path d="M9 9 12.800 12.800" stroke="#222" stroke-width="2.800" stroke-linecap="round"/></svg></div>
</div>
<!--WATERMARK-->
<div class="abs" style="left:1672px;top:896px;font-size:21.500px;line-height:28px;color:#b2b2b2;white-space:nowrap;letter-spacing:.15px">激活 Windows</div>
<div class="abs" style="left:1672px;top:924px;font-size:15.300px;line-height:20px;color:#b2b2b2;white-space:nowrap">转到"设置"以激活 <span style="font-size:17px">Windows</span>。</div>

</div>
</body>
</html>
